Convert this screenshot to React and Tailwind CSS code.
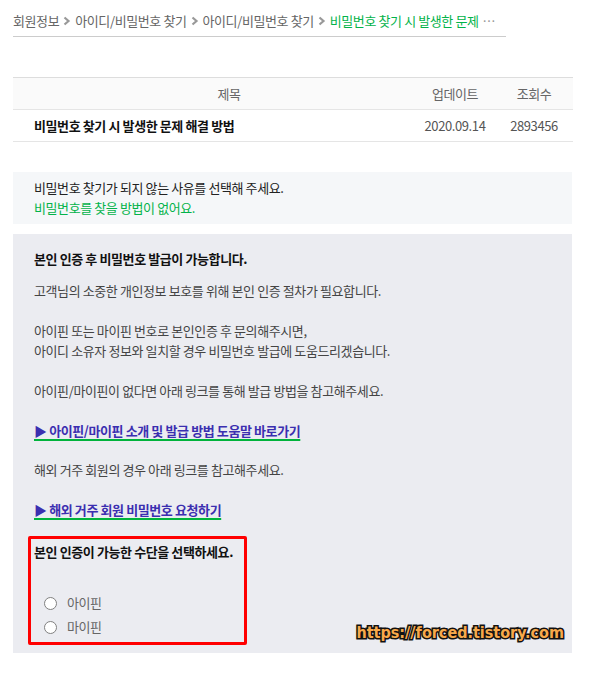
import React from "react";

const Chevron = () => (
  <svg width="8" height="10" viewBox="0 0 8 10" className="mx-[4px] inline-block">
    <path d="M1.5 1.5 L5.5 5 L1.5 8.5" fill="none" stroke="#999" strokeWidth="2.2" />
  </svg>
);

const Radio = ({ label }) => (
  <label className="flex items-center h-[24px] pl-[10px]">
    <span className="w-[13px] h-[13px] rounded-full border border-[#808080] bg-white" />
    <span className="ml-[10px] text-[#666]">{label}</span>
  </label>
);

const App = () => {
  return (
    <div
      className="w-[590px] h-[673px] bg-white text-[13px] leading-[20px] tracking-[-0.4px] text-[#333]"
      style={{ fontFamily: '"Noto Sans CJK KR", "Noto Sans", sans-serif' }}
    >
      {/* breadcrumb */}
      <div className="mx-[13px] w-[493px] pt-[11px] pb-[5px] border-b border-[#ccc] flex items-center text-[#666] whitespace-nowrap">
        <span>회원정보</span>
        <Chevron />
        <span>아이디/비밀번호 찾기</span>
        <Chevron />
        <span>아이디/비밀번호 찾기</span>
        <Chevron />
        <span className="text-[#03b34a]">비밀번호 찾기 시 발생한 문제</span>
        <span className="ml-[4px] text-[#999]">…</span>
      </div>

      {/* table */}
      <div className="mx-[13px] mt-[40px] w-[560px] border-t border-[#ddd]">
        <div className="flex h-[32px] items-center bg-[#fafafa] border-b border-[#e5e5e5] text-[#666]">
          <div className="flex-1 text-center pl-[30px]">제목</div>
          <div className="w-[80px] text-center">업데이트</div>
          <div className="w-[78px] text-center">조회수</div>
        </div>
        <div className="flex h-[32px] items-center border-b border-[#e5e5e5]">
          <div className="flex-1 pl-[21px] font-bold text-[#111]">비밀번호 찾기 시 발생한 문제 해결 방법</div>
          <div className="w-[80px] text-center text-[#555]">2020.09.14</div>
          <div className="w-[78px] text-center text-[#555]">2893456</div>
        </div>
      </div>

      {/* reason box */}
      <div className="mx-[13px] mt-[30px] w-[559px] bg-[#f5f7f9] pl-[21px] py-[6px]">
        <p className="text-[#222]">비밀번호 찾기가 되지 않는 사유를 선택해 주세요.</p>
        <p className="text-[#03b34a]">비밀번호를 찾을 방법이 없어요.</p>
      </div>

      {/* info box */}
      <div className="relative mx-[13px] mt-[10px] w-[559px] h-[419px] bg-[#ebecf1] pl-[21px] pt-[15px]">
        <p className="font-bold text-[#111] mb-[12px]">본인 인증 후 비밀번호 발급이 가능합니다.</p>
        <p className="text-[#444]">고객님의 소중한 개인정보 보호를 위해 본인 인증 절차가 필요합니다.</p>
        <p className="text-[#444] mt-[20px]">
          아이핀 또는 마이핀 번호로 본인인증 후 문의해주시면,
          <br />
          아이디 소유자 정보와 일치할 경우 비밀번호 발급에 도움드리겠습니다.
        </p>
        <p className="text-[#444] mt-[20px]">아이핀/마이핀이 없다면 아래 링크를 통해 발급 방법을 참고해주세요.</p>
        <p className="mt-[20px]">
          <a className="font-bold text-[#3b2fb0] underline decoration-[#00b33c] decoration-2 underline-offset-[3px]">
            ▶ 아이핀/마이핀 소개 및 발급 방법 도움말 바로가기
          </a>
        </p>
        <p className="text-[#444] mt-[19px]">해외 거주 회원의 경우 아래 링크를 참고해주세요.</p>
        <p className="mt-[20px]">
          <a className="font-bold text-[#3b2fb0] underline decoration-[#00b33c] decoration-2 underline-offset-[3px]">
            ▶ 해외 거주 회원 비밀번호 요청하기
          </a>
        </p>

        <div className="ml-[-6px] mt-[16px] w-[219px] h-[109px] border-[3px] border-[#ff0000] rounded-[2px] pl-[3px] pt-[3px]">
          <p className="font-bold text-[#111]">본인 인증이 가능한 수단을 선택하세요.</p>
          <div className="mt-[29px]">
            <Radio label="아이핀" />
            <Radio label="마이핀" />
          </div>
        </div>

        <div
          className="absolute right-[8px] bottom-[11px] text-[16px] leading-[18px] font-bold tracking-normal text-[#f7a94b] [-webkit-text-stroke:3px_#111] [paint-order:stroke_fill]"
          style={{ fontFamily: '"DejaVu Sans Condensed", "DejaVu Sans", sans-serif' }}
        >
          https://forced.tistory.com
        </div>
      </div>
    </div>
  );
};

export default App;
